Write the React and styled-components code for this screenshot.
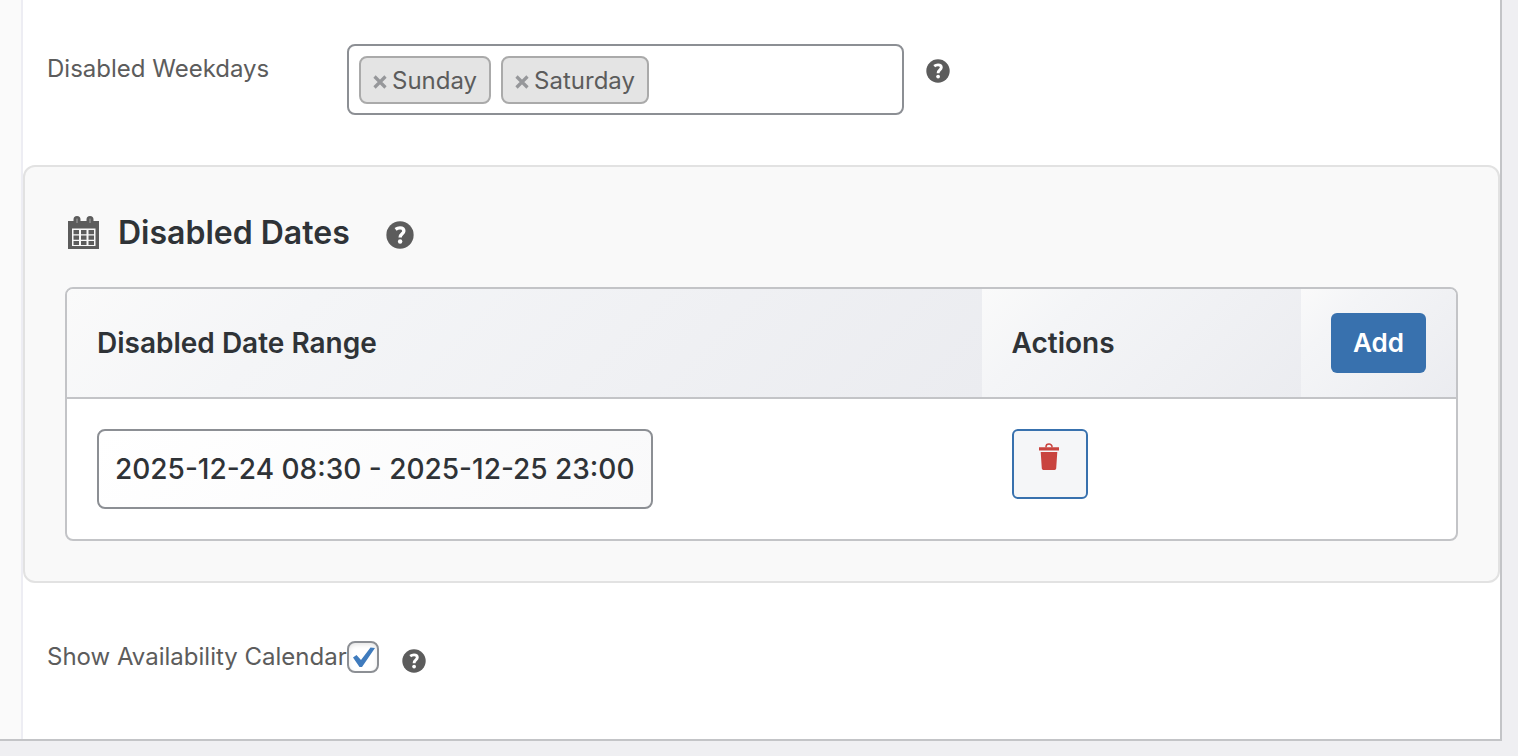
import React, { useState } from 'react';
import styled, { createGlobalStyle } from 'styled-components';

const HelpIcon = ({ size }) => (
  <svg width={size} height={size} viewBox="0 0 24 24" aria-hidden="true">
    <circle cx="12" cy="12" r="11.7" fill="currentColor" />
    <path d="M8.2 7.2 C9.4 6.3 10.6 5.9 12 5.9 C14.3 5.9 15.3 7 15.3 8.5 C15.3 11 12.1 11 12.1 14.2" fill="none" stroke="#fff" strokeWidth="2.9" />
    <circle cx="12.1" cy="17.6" r="1.9" fill="#fff" />
  </svg>
);

const CalendarIcon = () => (
  <svg width="32" height="34" viewBox="0 0 32 34" aria-hidden="true">
    <path d="M0 5 H5.5 V3.5 a3.5 3.5 0 0 1 7 0 V5 H18.5 V3.5 a3.5 3.5 0 0 1 7 0 V5 H31 V33 H0 Z" fill="#5c5c5c" />
    <path d="M9 2.6 V7 M22 2.6 V7" stroke="#a5a5a5" strokeWidth="1" />
    <path d="M4 12.5 H27.5 V30 H4 Z" fill="#f9f9f9" />
    <path d="M5.5 14 h5.5 v4.2 h-5.5 Z M13 14 h5.5 v4.2 h-5.5 Z M20.5 14 h5.5 v4.2 h-5.5 Z M5.5 19.5 h5.5 v4.2 h-5.5 Z M13 19.5 h5.5 v4.2 h-5.5 Z M20.5 19.5 h5.5 v4.2 h-5.5 Z M5.5 25 h5.5 v4 h-5.5 Z M13 25 h5.5 v4 h-5.5 Z M20.5 25 h5.5 v4 h-5.5 Z" fill="#5c5c5c" />
  </svg>
);

const TrashIcon = () => (
  <svg width="22" height="28" viewBox="0 0 22 28" aria-hidden="true">
    <path d="M8 4.5 V3.7 a3 2.6 0 0 1 6 0 V4.5" fill="none" stroke="#c9443f" strokeWidth="1.5" />
    <path d="M1 4.3 H21 V7.5 H1 Z M2.7 9 H19.3 L18.2 25.6 Q18 27 16.6 27 H5.4 Q4 27 3.8 25.6 Z" fill="#c9443f" />
  </svg>
);

const RemoveIcon = () => (
  <svg width="14" height="14" viewBox="0 0 14 14" aria-hidden="true">
    <path d="M1.5 1.5 L12.5 12.5 M12.5 1.5 L1.5 12.5" stroke="currentColor" strokeWidth="3.2" />
  </svg>
);

const App = () => {
  const [weekdays, setWeekdays] = useState(['Sunday', 'Saturday']);
  const [ranges, setRanges] = useState(['2025-12-24 08:30 - 2025-12-25 23:00']);
  const [showCalendar, setShowCalendar] = useState(true);

  const updateRange = (index, value) => setRanges(ranges.map((range, i) => (i === index ? value : range)));

  return (
    <>
      <GlobalStyle />
      <Panel>
        <Options>
          <WeekdaysRow>
            <WeekdaysLabel id="weekdays-label">Disabled Weekdays</WeekdaysLabel>
            <TagsBox role="group" aria-labelledby="weekdays-label">
              {weekdays.map((day) => (
                <Tag key={day}>
                  <TagRemove type="button" aria-label={`Remove ${day}`} onClick={() => setWeekdays(weekdays.filter((d) => d !== day))}>
                    <RemoveIcon />
                  </TagRemove>
                  {day}
                </Tag>
              ))}
            </TagsBox>
            <WeekdaysHelp type="button" aria-label="Help">
              <HelpIcon size={24} />
            </WeekdaysHelp>
          </WeekdaysRow>

          <DatesSection>
            <SectionHeader>
              <CalendarIcon />
              <SectionTitle>Disabled Dates</SectionTitle>
              <SectionHelp type="button" aria-label="Help">
                <HelpIcon size={28} />
              </SectionHelp>
            </SectionHeader>
            <TableFrame>
              <DatesTable>
                <colgroup>
                  <Col />
                  <Col $width="23%" />
                  <Col $width="155px" />
                </colgroup>
                <thead>
                  <tr>
                    <HeadCell scope="col">Disabled Date Range</HeadCell>
                    <HeadCell scope="col">Actions</HeadCell>
                    <HeadCell scope="col">
                      <AddButton type="button" onClick={() => setRanges([...ranges, ''])}>
                        Add
                      </AddButton>
                    </HeadCell>
                  </tr>
                </thead>
                <tbody>
                  {ranges.map((range, index) => (
                    <tr key={index}>
                      <Cell>
                        <RangeInput type="text" aria-label="Disabled Date Range" value={range} onChange={(e) => updateRange(index, e.target.value)} />
                      </Cell>
                      <Cell>
                        <DeleteButton type="button" aria-label="Delete" onClick={() => setRanges(ranges.filter((_, i) => i !== index))}>
                          <TrashIcon />
                        </DeleteButton>
                      </Cell>
                      <Cell />
                    </tr>
                  ))}
                </tbody>
              </DatesTable>
            </TableFrame>
          </DatesSection>

          <CalendarRow>
            <CalendarLabel htmlFor="show-calendar">Show Availability Calendar</CalendarLabel>
            <CheckWrap>
              <Checkbox id="show-calendar" type="checkbox" checked={showCalendar} onChange={(e) => setShowCalendar(e.target.checked)} />
              {showCalendar ? (
                <CheckMark viewBox="0 0 32 32" aria-hidden="true">
                  <path d="M6 16.5 L9.5 14 L14 19 L23.5 6.5 L28 7 L15 26 L12.5 26 Z" fill="#3f7bbd" />
                </CheckMark>
              ) : null}
            </CheckWrap>
            <CalendarHelp type="button" aria-label="Help">
              <HelpIcon size={24} />
            </CalendarHelp>
          </CalendarRow>
        </Options>
      </Panel>
    </>
  );
};

export default App;

const GlobalStyle = createGlobalStyle`
  * {
    box-sizing: border-box;
  }
  body {
    margin: 0;
    background: #efeff2;
    font-family: Inter, Roboto, sans-serif;
    font-size: 24px;
    line-height: 32px;
    color: #5c5c5c;
  }
`;

const Panel = styled.div`
  margin: 0 16px 16px 0;
  padding-left: 21px;
  background: #fafafa;
  border: solid #c3c4c7;
  border-width: 0 2px 2px 0;
`;

const Options = styled.div`
  background: #fff;
  border-left: 2px solid #ededf3;
`;

const WeekdaysRow = styled.div`
  display: flex;
  align-items: flex-start;
  padding: 44px 24px 50px;
`;

const WeekdaysLabel = styled.div`
  width: 300px;
  flex-shrink: 0;
  padding-top: 9px;
`;

const TagsBox = styled.div`
  display: flex;
  align-items: flex-start;
  gap: 10px;
  flex: 0 1 557px;
  min-height: 71px;
  padding: 10px 10px 9px;
  border: 2px solid #8c8f94;
  border-radius: 8px;
`;

const Tag = styled.span`
  display: flex;
  align-items: center;
  gap: 5px;
  height: 48px;
  padding: 2px 12px 0;
  background: #e4e4e4;
  border: 2px solid #aaa;
  border-radius: 8px;
`;

const IconButton = styled.button`
  display: flex;
  padding: 0;
  border: 0;
  background: none;
  color: #5c5c5c;
  cursor: pointer;
`;

const TagRemove = styled(IconButton)`
  padding-top: 2px;
  color: #96979a;
`;

const WeekdaysHelp = styled(IconButton)`
  margin: 15px 0 0 22px;
`;

const DatesSection = styled.section`
  padding: 40px;
  background: #f9f9f9;
  border: 2px solid #e2e2e2;
  border-radius: 12px;
`;

const SectionHeader = styled.div`
  display: flex;
  align-items: center;
  height: 52px;
  margin-bottom: 28px;
  padding-left: 3px;
`;

const SectionTitle = styled.h3`
  margin: 0 0 0 18px;
  font-size: 32px;
  font-weight: 600;
  line-height: 40px;
  color: #2f3337;
`;

const SectionHelp = styled(IconButton)`
  margin: 4px 0 0 36px;
`;

const TableFrame = styled.div`
  overflow: hidden;
  background: #fff;
  border: 2px solid #c3c4c7;
  border-radius: 8px;
`;

const DatesTable = styled.table`
  width: 100%;
  table-layout: fixed;
  border-collapse: separate;
  border-spacing: 0;
`;

const Col = styled.col`
  width: ${({ $width }) => $width || 'auto'};
`;

const HeadCell = styled.th`
  height: 110px;
  padding: 0 30px;
  text-align: left;
  font-size: 28px;
  font-weight: 600;
  color: #2f3337;
  background: linear-gradient(135deg, #fafafa 0%, #f4f5f7 25%, #ebecf0 100%);
  border-bottom: 2px solid #c3c4c7;
`;

const Cell = styled.td`
  padding: 30px;
  vertical-align: top;
`;

const AddButton = styled.button`
  display: block;
  width: 95px;
  height: 60px;
  padding: 0;
  border: 0;
  border-radius: 6px;
  background: #3871ae;
  color: #fff;
  font: inherit;
  font-size: 26px;
  cursor: pointer;
`;

const RangeInput = styled.input`
  display: block;
  width: 556px;
  max-width: 100%;
  height: 80px;
  padding: 0 16px;
  border: 2px solid #8c8f94;
  border-radius: 8px;
  background: linear-gradient(135deg, #fff, #f9f9fa);
  color: #2f3337;
  font: inherit;
  font-size: 28px;
  font-weight: 500;
`;

const DeleteButton = styled.button`
  display: flex;
  justify-content: center;
  align-items: flex-start;
  width: 76px;
  height: 70px;
  padding: 12px 2px 0 0;
  border: 2px solid #3871ae;
  border-radius: 6px;
  background: #f5f6f8;
  cursor: pointer;
`;

const CalendarRow = styled.div`
  display: flex;
  align-items: center;
  padding: 58px 24px 66px;
`;

const CalendarLabel = styled.label`
  width: 300px;
  flex-shrink: 0;
  white-space: nowrap;
`;

const CheckWrap = styled.span`
  position: relative;
  display: flex;
`;

const Checkbox = styled.input`
  appearance: none;
  width: 32px;
  height: 32px;
  margin: 0;
  border: 2px solid #8c8f94;
  border-radius: 8px;
  background: #fff;
  box-shadow: inset 0 2px 4px rgba(0, 0, 0, 0.1);
`;

const CheckMark = styled.svg`
  position: absolute;
  top: 0;
  left: 0;
  width: 32px;
  height: 32px;
  pointer-events: none;
`;

const CalendarHelp = styled(IconButton)`
  margin: 8px 0 0 23px;
`;
